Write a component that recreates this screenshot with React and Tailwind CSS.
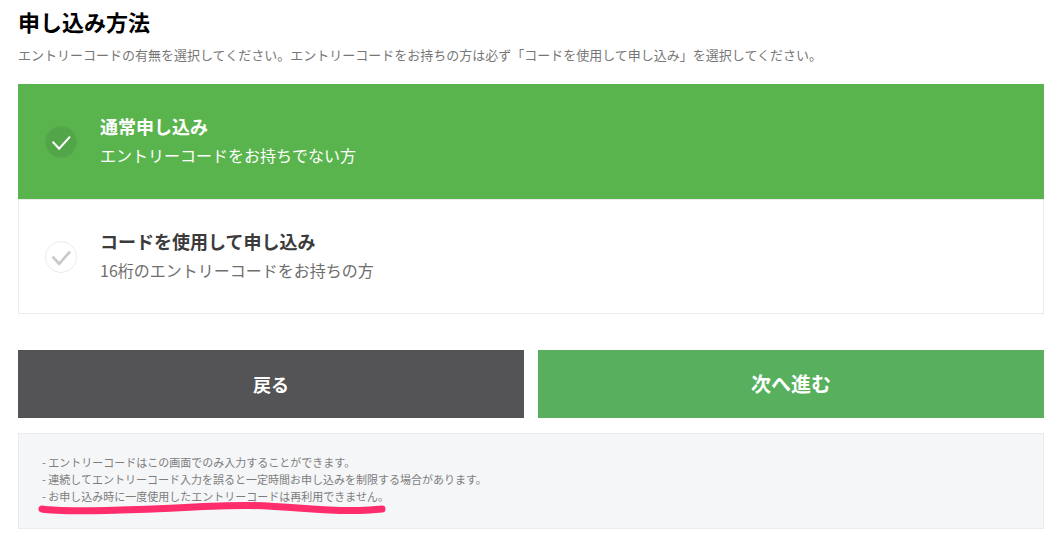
import { useState } from 'react';

const options = [
  { id: 'normal', title: '通常申し込み', text: 'エントリーコードをお持ちでない方' },
  { id: 'code', title: 'コードを使用して申し込み', text: '16桁のエントリーコードをお持ちの方' },
];

const notes = [
  '- エントリーコードはこの画面でのみ入力することができます。',
  '- 連続してエントリーコード入力を誤ると一定時間お申し込みを制限する場合があります。',
  '- お申し込み時に一度使用したエントリーコードは再利用できません。',
];

function CheckMark({ selected }) {
  return (
    <svg
      viewBox="0 0 32 32"
      aria-hidden="true"
      className={
        'size-8 shrink-0 rounded-full border ' +
        (selected ? 'border-[#54a94a] bg-[#52a649] text-white' : 'border-[#ebebeb] bg-white text-[#c8c8c8]')
      }
    >
      <path d="M7 15.6 L14 23.2 L25.6 10.2" fill="none" stroke="currentColor" strokeWidth={selected ? 2.2 : 2.8} />
    </svg>
  );
}

function Option({ option, selected, onSelect }) {
  return (
    <label
      className={
        'flex cursor-pointer items-center gap-[23px] border px-[26px] py-[26px] has-focus-visible:outline-2 ' +
        (selected ? 'border-[#5ab44d] bg-[#5ab44d] text-white' : 'border-[#ebebeb] bg-white text-[#3b3b3b]')
      }
    >
      <input
        type="radio"
        name="method"
        value={option.id}
        checked={selected}
        onChange={() => onSelect(option.id)}
        className="sr-only"
      />
      <CheckMark selected={selected} />
      <span className="flex flex-col pb-[3px]">
        <span className="text-lg leading-[30px] font-bold">{option.title}</span>
        <span className={'text-base leading-7 ' + (selected ? 'text-white' : 'text-[#6e6e6e]')}>{option.text}</span>
      </span>
    </label>
  );
}

export default function App() {
  const [method, setMethod] = useState('normal');

  return (
    <main className="bg-white pt-[3px] pr-[13px] pb-1 pl-[18px] font-['Noto_Sans_CJK_JP',sans-serif]">
      <h1 id="method-heading" className="text-[22px] leading-9 font-bold text-black">
        申し込み方法
      </h1>
      <p className="pt-1 text-[13px] leading-6 text-[#777]">
        エントリーコードの有無を選択してください。エントリーコードをお持ちの方は必ず「コードを使用して申し込み」を選択してください。
      </p>

      <form onSubmit={(event) => event.preventDefault()}>
        <fieldset aria-labelledby="method-heading" className="mt-[17px]">
          {options.map((option) => (
            <Option key={option.id} option={option} selected={method === option.id} onSelect={setMethod} />
          ))}
        </fieldset>

        <div className="mt-9 grid grid-cols-2 gap-3.5">
          <button type="button" className="h-[68px] cursor-pointer bg-[#545456] text-lg font-bold text-white">
            戻る
          </button>
          <button type="submit" className="h-[68px] cursor-pointer bg-[#58b05e] text-xl font-bold text-white">
            次へ進む
          </button>
        </div>
      </form>

      <section className="mt-[15px] border border-[#ebebeb] bg-[#f5f6f8] px-[23px] pt-5 pb-[23px]">
        <div className="relative">
          <ul className="text-[11px] leading-[17px] text-[#7d7d7d]">
            {notes.map((note) => (
              <li key={note}>{note}</li>
            ))}
          </ul>
          <svg
            viewBox="0 0 350 16"
            aria-hidden="true"
            className="absolute top-[46px] -left-1 h-4 w-[350px]"
          >
            <path
              d="M4 9 C22 12 58 11 100 9.5 C145 8 180 5 212 5.5 C252 6 285 11.5 318 10.5 C328 10.2 336 9.5 344 9"
              fill="none"
              stroke="#ff2d6b"
              strokeWidth="7"
              strokeLinecap="round"
            />
          </svg>
        </div>
      </section>
    </main>
  );
}
